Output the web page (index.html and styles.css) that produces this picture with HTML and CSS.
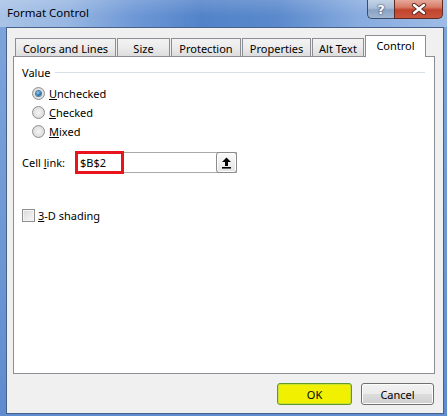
FILE: index.html
```html
<!DOCTYPE html>
<html>
<head>
<meta charset="utf-8">
<link rel="stylesheet" href="styles.css">
</head>
<body>
<div class="window">
  <div class="titlebar">
    <span class="title">Format Control</span>
    <div class="caption-buttons">
      <div class="cap-btn cap-help">?</div>
      <div class="cap-btn cap-close">
        <svg width="16" height="12" viewBox="0 0 16 12">
          <path d="M3 2 L13 10 M13 2 L3 10" stroke="#5a2a22" stroke-width="4.2" stroke-linecap="round"/>
          <path d="M3 2 L13 10 M13 2 L3 10" stroke="#ffffff" stroke-width="2.4" stroke-linecap="round"/>
        </svg>
      </div>
    </div>
  </div>
  <div class="client">
    <div class="tabs">
      <div class="tab tab-colors">Colors and Lines</div>
      <div class="tab tab-size">Size</div>
      <div class="tab tab-protection">Protection</div>
      <div class="tab tab-properties">Properties</div>
      <div class="tab tab-alt">Alt Text</div>
      <div class="tab tab-active tab-control">Control</div>
    </div>
    <div class="panel">
      <div class="group-title"><span>Value</span></div>
      <div class="radios">
        <div class="radio-row"><span class="radio radio-on"></span><span><u>U</u>nchecked</span></div>
        <div class="radio-row"><span class="radio"></span><span><u>C</u>hecked</span></div>
        <div class="radio-row"><span class="radio"></span><span><u>M</u>ixed</span></div>
      </div>
      <div class="cell-row">
        <span class="cell-label">Cell <u>l</u>ink:</span>
        <div class="cell-input">
          <span class="cell-value">$B$2</span>
          <span class="highlight"></span>
          <span class="ref-btn">
            <svg width="11" height="12" viewBox="0 0 11 12">
              <path d="M5.5 0.5 L10 5 L7 5 L7 9 L4 9 L4 5 L1 5 Z" fill="#000"/>
              <rect x="1" y="10" width="9" height="1.6" fill="#000"/>
            </svg>
          </span>
        </div>
      </div>
      <div class="check-row"><span class="checkbox"></span><span><u>3</u>-D shading</span></div>
    </div>
    <div class="buttons">
      <div class="btn btn-ok">OK</div>
      <div class="btn btn-cancel">Cancel</div>
    </div>
  </div>
</div>
</body>
</html>
```

FILE: styles.css
```css
* { box-sizing: border-box; }
html, body { margin: 0; padding: 0; }
body {
  width: 447px;
  height: 416px;
  overflow: hidden;
  font-family: "Segoe UI", "Noto Sans", sans-serif;
  font-size: 11px;
  color: #000;
}
.window {
  width: 447px;
  height: 416px;
  display: flex;
  flex-direction: column;
  background: linear-gradient(to bottom, #7fa5db 0%, #6d97d4 60%, #5f8bcf 100%);
}
.titlebar {
  height: 27px;
  display: flex;
  align-items: flex-start;
  background:
    linear-gradient(to bottom, rgba(255,255,255,0.15), rgba(255,255,255,0) 60%),
    linear-gradient(to right, #a9c3e6 0%, #97b6e2 15%, #6e98d6 30%, #5283c9 45%, #5a89cc 62%, #87abdf 80%, #9ebce6 100%);
}
.title {
  margin-left: 7px;
  margin-top: 5px;
  line-height: 16px;
  font-size: 11.5px;
}
.caption-buttons {
  margin-left: auto;
  margin-right: 4px;
  display: flex;
}
.cap-btn {
  height: 19px;
  display: flex;
  align-items: center;
  justify-content: center;
  border: 1px solid #3a4d6a;
  border-top: none;
}
.cap-help {
  width: 27px;
  border-radius: 0 0 0 5px;
  border-right: none;
  background: linear-gradient(to bottom, #c4d3e6 0%, #a9bdd8 45%, #8aa3c4 55%, #9fb5d2 100%);
  color: #fff;
  font-family: "DejaVu Sans", sans-serif;
  font-weight: bold;
  font-size: 13px;
  text-shadow: 0 0 2px #2c3c55, 0 0 1px #2c3c55;
}
.cap-close {
  width: 49px;
  border-radius: 0 0 5px 0;
  border-color: #5e2a22;
  background: linear-gradient(to bottom, #e6a99a 0%, #d77a66 40%, #c2432d 55%, #c9563f 100%);
}
.client {
  flex: 1;
  margin: 0 3px 2px 6px;
  border: 1px solid #46618a;
  background: #f0f0f0;
  padding: 7px 8px 0 6px;
  display: flex;
  flex-direction: column;
}
.tabs {
  height: 22px;
  display: flex;
  align-items: flex-end;
  gap: 1px;
  padding-left: 2px;
  margin-bottom: -1px;
  position: relative;
  z-index: 1;
}
.tab {
  height: 18px;
  margin-bottom: 1px;
  border: 1px solid #8c8e94;
  border-bottom: none;
  background: linear-gradient(to bottom, #f3f3f3 0%, #ebebeb 50%, #dddddd 100%);
  display: flex;
  align-items: center;
  justify-content: center;
  line-height: 15px;
  padding-top: 1px;
}
.tab-colors { width: 101px; }
.tab-size { width: 53px; }
.tab-protection { width: 70px; }
.tab-properties { width: 69px; }
.tab-alt { width: 52px; }
.tab-control { width: 61px; }
.tab-active {
  height: 22px;
  margin-bottom: 0;
  background: #fff;
  padding-top: 0;
  padding-bottom: 2px;
}
.panel {
  height: 318px;
  border: 1px solid #8c8e94;
  background: #fff;
  padding: 8px 9px 0 8px;
}
.group-title {
  display: flex;
  align-items: center;
  line-height: 15px;
}
.group-title::after {
  content: "";
  flex: 1;
  height: 1px;
  margin-left: 5px;
  background: #d5dfe5;
}
.radios {
  margin-top: 4px;
  padding-left: 10px;
}
.radio-row {
  height: 19px;
  display: flex;
  align-items: center;
  gap: 4px;
}
.radio {
  width: 13px;
  height: 13px;
  border-radius: 50%;
  border: 1px solid #8f8f8f;
  background: radial-gradient(circle at 50% 50%, #f4f4f4 0%, #e2e2e2 55%, #d0d0d0 100%);
  display: flex;
  align-items: center;
  justify-content: center;
}
.radio-on::after {
  content: "";
  width: 5px;
  height: 5px;
  border-radius: 50%;
  background: radial-gradient(circle at 40% 35%, #9fd4f4 0%, #2a7cb8 50%, #12466f 100%);
  box-shadow: 0 0 0 1px #5a7f9a;
}
.cell-row {
  margin-top: 11px;
  display: flex;
  align-items: center;
  height: 21px;
}
.cell-label {
  width: 53px;
}
.cell-input {
  position: relative;
  width: 162px;
  height: 21px;
  border: 1px solid #a9a9a9;
  display: flex;
  align-items: center;
  padding-left: 4px;
}
.cell-value {
  line-height: 15px;
}
.highlight {
  position: absolute;
  left: -1px;
  top: -2px;
  width: 49px;
  height: 23px;
  border: 3px solid #e8141c;
}
.ref-btn {
  margin: -1px -1px -1px auto;
  align-self: stretch;
  width: 21px;
  border: 1px solid #8a8a8a;
  border-radius: 3px;
  background: linear-gradient(to bottom, #fbfbfb 0%, #efefef 50%, #e2e2e2 100%);
  box-shadow: inset 0 0 0 1px #fff;
  display: flex;
  align-items: center;
  justify-content: center;
}
.check-row {
  margin-top: 33px;
  height: 19px;
  display: flex;
  align-items: center;
  gap: 3px;
}
.checkbox {
  width: 13px;
  height: 13px;
  border: 1px solid #8f8f8f;
  background: linear-gradient(135deg, #d8d8d8 0%, #ececec 60%, #f6f6f6 100%);
  box-shadow: inset 0 0 0 1px #f4f4f4;
}
.buttons {
  margin-top: 9px;
  display: flex;
  justify-content: flex-end;
  gap: 9px;
  padding-right: 1px;
}
.btn {
  height: 22px;
  border-radius: 3px;
  display: flex;
  align-items: center;
  justify-content: center;
  line-height: 15px;
}
.btn-ok {
  width: 75px;
  background: #f0f000;
  border: 1px solid #5e9a2c;
  box-shadow: inset 0 0 0 1px #c8e030;
}
.btn-cancel {
  width: 73px;
  border: 1px solid #707070;
  background: linear-gradient(to bottom, #f2f2f2 0%, #ebebeb 50%, #dddddd 51%, #cfcfcf 100%);
  box-shadow: inset 0 0 0 1px #fcfcfc;
}
```
